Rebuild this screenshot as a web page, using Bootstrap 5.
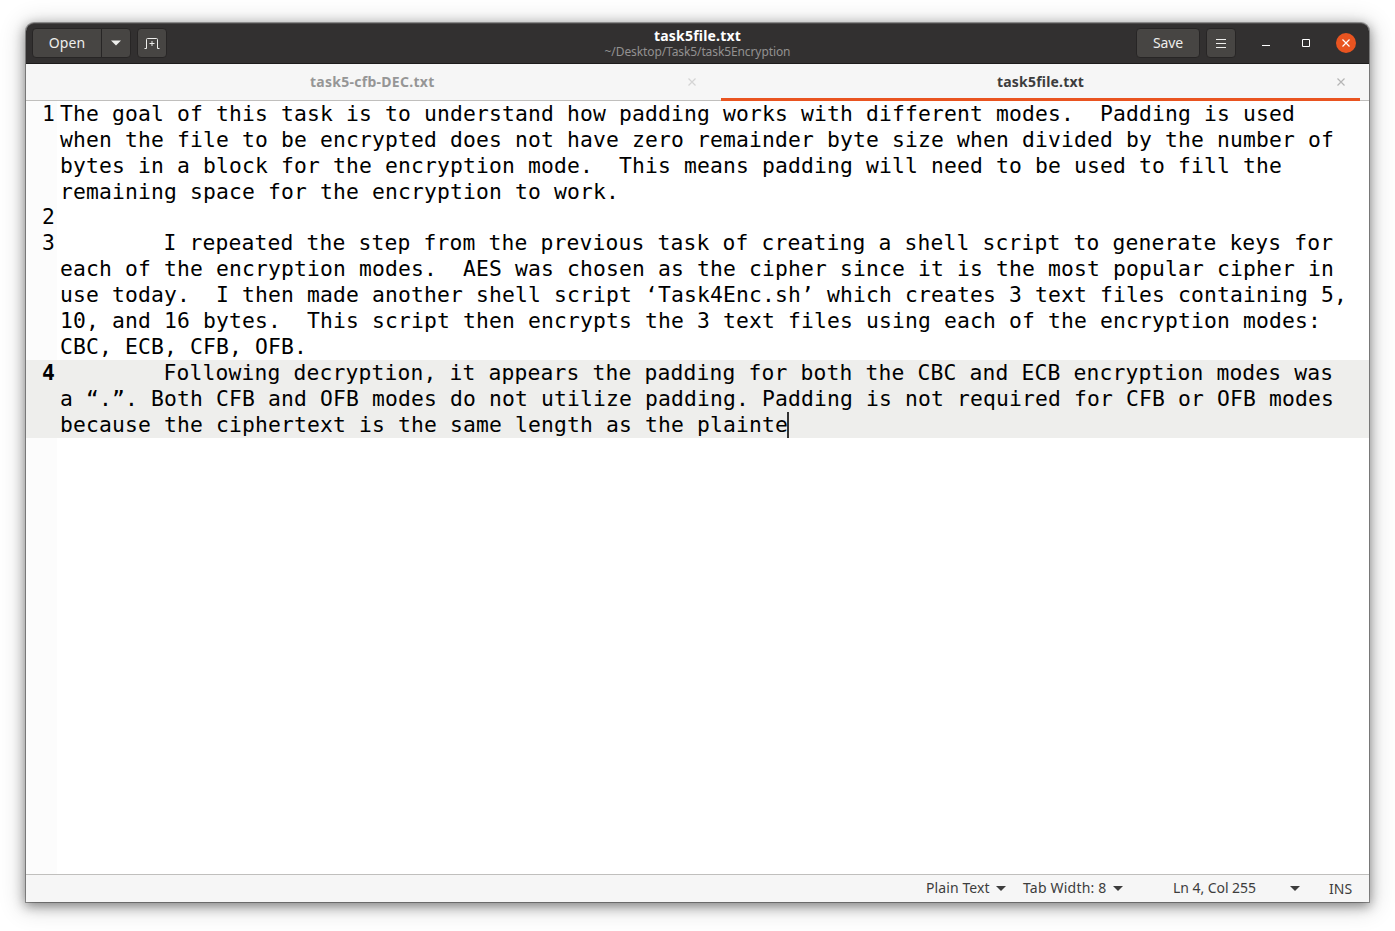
<!DOCTYPE html>
<html lang="en">
<head>
<meta charset="utf-8">
<meta name="viewport" content="width=device-width, initial-scale=1">
<title>task5file.txt</title>
<link href="https://cdn.jsdelivr.net/npm/bootstrap@5.3.0/dist/css/bootstrap.min.css" rel="stylesheet">
<style>
body{font-family:"Noto Sans","Open Sans",sans-serif;font-size:14px;line-height:20px;color:#3d3d3d;background:#fff;height:931px;padding:23px 26px 29px}
.win{height:879px;border-radius:8px 8px 0 0;box-shadow:0 0 0 1px rgba(0,0,0,.32),0 3px 12px 1px rgba(0,0,0,.42),0 3px 24px 4px rgba(0,0,0,.16);background:#fff}
.titlebar{height:41px;background:#323030;border-bottom:1px solid #1d1c1c;border-top:1px solid #4b4949;border-radius:8px 8px 0 0;padding:4px 13px 0 6px;display:grid;grid-template-columns:1fr auto 1fr}
.gbtn{height:30px;padding:0;border:1px solid #272525;background:#474543;color:#eeeeec;border-radius:4px;font-size:14px;line-height:20px;display:flex;align-items:center;justify-content:center}
.gbtn:hover{background:#504e4b;color:#fff;border-color:#272525}
.w-open{width:70px;letter-spacing:.1px}.w-drop{width:30px;margin-left:-1px}.w-sq{width:30px}.w-save{width:64px;letter-spacing:-.1px}
.heads{padding-left:7px;margin-top:-1px}
.heading{font-size:14px;line-height:17px;font-weight:700;color:#fff;letter-spacing:.2px}
.path{font-size:12px;line-height:14px;color:#929190;letter-spacing:-.1px;margin-top:1px}
.new-doc{margin-left:6px}.menu-btn{margin-left:6px}.wctl{margin-right:-10px}
.tabs{height:37px;background:#f6f6f6;border-bottom:1px solid #c0bfbd;padding:0 9px 0 0}
.doc-tab{font-weight:700;color:#969696;height:37px;padding-bottom:1px}
.doc-tab.current{color:#3d3d3d;border-bottom:3px solid #e95420;padding-top:1px;padding-bottom:0}
.t-one{width:695px}.t-two{width:639px}
.t1{margin-left:284px;width:124px;letter-spacing:.27px;white-space:nowrap}
.t2{margin-left:276px;width:86px;letter-spacing:.2px;white-space:nowrap}
.tab-x{margin-left:254px}
.editor{font-family:"DejaVu Sans Mono",monospace;font-size:21.33px;letter-spacing:.159px;line-height:26px;color:#000;background:linear-gradient(to right,#fcfcfc 31px,#fff 31px);height:773px}
.ln{width:34px;padding-left:16px;flex:none}
.txt{white-space:pre;tab-size:103.4px}
.empty-line{height:25px;line-height:24px}
.cur{background:#eeeeec}
.caret-bar{display:inline-block;width:2px;height:26px;background:#333;vertical-align:top;margin-left:-1px}
.status{height:28px;background:#f6f6f6;border-top:1px solid #c0bfbd;padding:3px 0 0 900px}
.s1{width:70px;letter-spacing:.1px}
.s2{width:90px;letter-spacing:.2px;margin-left:17px}
.s3{width:117px;letter-spacing:-.05px;margin-left:50px}
.ins{margin-left:29px;padding-top:1px}
svg{display:block;flex:none}
</style>
</head>
<body>
<main class="win d-flex flex-column">
<header class="titlebar flex-shrink-0">
 <div class="d-flex">
  <button class="btn gbtn w-open rounded-end-0">Open</button>
  <button class="btn gbtn w-drop rounded-start-0" aria-label="Recent"><svg width="10" height="6"><path d="M0 .5h10L5 5.5z" fill="#eeeeec"/></svg></button>
  <button class="btn gbtn w-sq new-doc" aria-label="New"><svg width="16" height="16" fill="none" stroke="#eeeeec"><path d="M.5 13.500h2v-9q0-1 1-1h9q1 0 1 1v9h2M5.500 8.500h5M8 6v5"/></svg></button>
 </div>
 <div class="heads text-center"><div class="heading">task5file.txt</div><div class="path">~/Desktop/Task5/task5Encryption</div></div>
 <div class="d-flex justify-content-end">
  <button class="btn gbtn w-save">Save</button>
  <button class="btn gbtn w-sq menu-btn" aria-label="Menu"><svg width="10" height="9" fill="#eeeeec"><path d="M0 0h10v1H0zM0 4h10v1H0zM0 8h10v1H0z"/></svg></button>
  <svg class="wctl" width="130" height="30"><path d="M26 17h8v1h-8z" fill="#fff"/><path d="M66.500 11.500h7v7h-7z" fill="none" stroke="#fff"/><circle cx="110" cy="15" r="10" fill="#e95420"/><path d="M106.500 11.500l7 7m0-7l-7 7" stroke="#fff" stroke-width="1.2"/></svg>
 </div>
</header>
<nav class="tabs d-flex flex-shrink-0">
 <div class="doc-tab t-one d-flex align-items-center"><span class="t1">task5-cfb-DEC.txt</span><svg class="tab-x" width="8" height="8"><path d="M.5.5l7 7m0-7l-7 7" stroke="#d4d4d4" stroke-width="1.2"/></svg></div>
 <div class="doc-tab current t-two d-flex align-items-center"><span class="t2">task5file.txt</span><svg class="tab-x" width="8" height="8"><path d="M.5.5l7 7m0-7l-7 7" stroke="#b5b5b5" stroke-width="1.2"/></svg></div>
</nav>
<section class="editor flex-shrink-0">
<div class="d-flex"><div class="ln">1</div><div class="txt">The goal of this task is to understand how padding works with different modes.  Padding is used
when the file to be encrypted does not have zero remainder byte size when divided by the number of
bytes in a block for the encryption mode.  This means padding will need to be used to fill the
remaining space for the encryption to work.</div></div>
<div class="d-flex empty-line"><div class="ln">2</div></div>
<div class="d-flex"><div class="ln">3</div><div class="txt">	I repeated the step from the previous task of creating a shell script to generate keys for
each of the encryption modes.  AES was chosen as the cipher since it is the most popular cipher in
use today.  I then made another shell script ‘Task4Enc.sh’ which creates 3 text files containing 5,
10, and 16 bytes.  This script then encrypts the 3 text files using each of the encryption modes:
CBC, ECB, CFB, OFB.</div></div>
<div class="d-flex cur"><div class="ln fw-bold">4</div><div class="txt">	Following decryption, it appears the padding for both the CBC and ECB encryption modes was
a “.”. Both CFB and OFB modes do not utilize padding. Padding is not required for CFB or OFB modes
because the ciphertext is the same length as the plainte<span class="caret-bar"></span></div></div>
</section>
<footer class="status d-flex flex-shrink-0">
 <div class="s1 text-nowrap">Plain Text</div><svg class="mt-2" width="10" height="6"><path d="M0 0h10L5 5z" fill="#3d3d3d"/></svg>
 <div class="s2 text-nowrap">Tab Width: 8</div><svg class="mt-2" width="10" height="6"><path d="M0 0h10L5 5z" fill="#3d3d3d"/></svg>
 <div class="s3 text-nowrap">Ln 4, Col 255</div><svg class="mt-2" width="10" height="6"><path d="M0 0h10L5 5z" fill="#3d3d3d"/></svg>
 <div class="ins">INS</div>
</footer>
</main>
<script src="https://cdn.jsdelivr.net/npm/bootstrap@5.3.0/dist/js/bootstrap.bundle.min.js"></script>
</body>
</html>
